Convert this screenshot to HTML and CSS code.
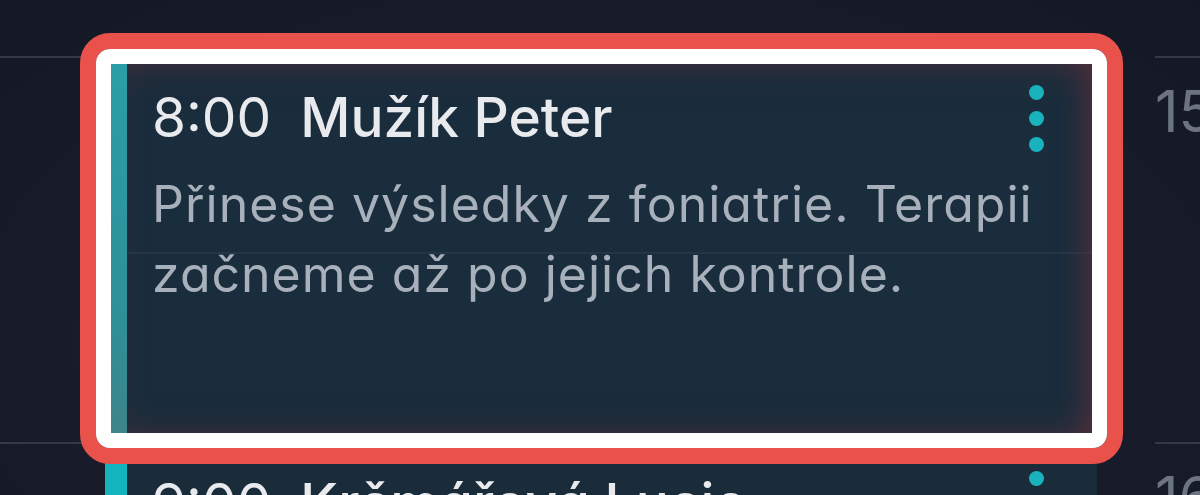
FILE: index.html
```html
<!DOCTYPE html>
<html lang="cs">
<head>
<meta charset="utf-8">
<title>Kalendář</title>
<link rel="stylesheet" href="styles.css">
</head>
<body>
<div class="page">
  <div class="gutter">
    <div class="slot"></div>
    <div class="slot"></div>
  </div>

  <div class="day">
    <article class="event event--selected">
      <div class="event-bar"></div>
      <div class="event-body">
        <h3 class="event-title"><span class="event-time">8:00</span><span class="event-name">Mužík Peter</span></h3>
        <p class="event-note">Přinese výsledky z foniatrie. Terapii začneme až po jejich kontrole.</p>
      </div>
      <button class="event-menu" aria-label="Možnosti"><span></span><span></span><span></span></button>
    </article>

    <article class="event">
      <div class="event-bar event-bar--bright"></div>
      <div class="event-body">
        <h3 class="event-title"><span class="event-time">9:00</span><span class="event-name">Krčmářová Lucie</span></h3>
        <p class="event-note">Kontrola po terapii.</p>
      </div>
      <button class="event-menu" aria-label="Možnosti"><span></span><span></span><span></span></button>
    </article>

    <div class="highlight"><div class="highlight-inner"></div></div>
  </div>

  <div class="hours">
    <div class="hour"><span class="hour-label">15</span></div>
    <div class="hour"><span class="hour-label">16</span></div>
  </div>
</div>
</body>
</html>
```

FILE: styles.css
```css
* { box-sizing: border-box; }

html, body {
  margin: 0;
  padding: 0;
}

body {
  width: 1200px;
  height: 495px;
  overflow: hidden;
  background: radial-gradient(ellipse at 50% 70%, #1b2030 0%, #191d2b 55%, #141724 100%);
  font-family: "Inter", "Noto Sans", "Liberation Sans", sans-serif;
  font-feature-settings: "cv11" 1;
}

.page {
  display: grid;
  grid-template-columns: 82px 1073px 45px;
  height: 495px;
}

/* left gutter with hour lines */
.gutter {
  padding-top: 56px;
}
.slot {
  height: 386px;
  border-top: 2px solid #343947;
}

/* day column */
.day {
  position: relative;
  padding: 59px 0 0 23px;
  display: flex;
  flex-direction: column;
  gap: 4px;
}

.event {
  position: relative;
  width: 992px;
  height: 382px;
  flex: none;
  display: flex;
  background: #1a2c3a;
  border-radius: 4px;
  overflow: hidden;
}

.event--selected {
  background:
    linear-gradient(to bottom, transparent 193px, rgba(255,255,255,0.045) 193px, rgba(255,255,255,0.045) 195px, transparent 195px),
    #1a2d3c;
  box-shadow:
    inset 0 0 40px rgba(120, 50, 60, 0.55),
    inset -20px 0 30px -10px rgba(120, 50, 60, 0.35);
}

.event-bar {
  width: 22px;
  flex: none;
  background: linear-gradient(to bottom, #2a9ea6, #2f8f97 70%, #3f8388);
}
.event-bar--bright {
  background: #14b4bf;
}

.event-body {
  flex: 1;
  padding: 26px 0 0 25px;
}

.event-title {
  margin: 0;
  font-size: 55px;
  line-height: 64px;
  color: #e8eaee;
  font-weight: 400;
  white-space: nowrap;
}
.event-time {
  margin-right: 29px;
}
.event-name {
  font-weight: 500;
}

.event-note {
  margin: 20px 0 0;
  width: 910px;
  font-size: 50px;
  line-height: 70px;
  letter-spacing: 1px;
  color: #a7b0bb;
}

.event-menu {
  position: absolute;
  top: 26px;
  right: 53px;
  display: flex;
  flex-direction: column;
  gap: 11px;
  padding: 0;
  border: 0;
  background: none;
}
.event-menu span {
  width: 15px;
  height: 15px;
  border-radius: 50%;
  background: #19b3bd;
}

/* red selection outline overlaid on the selected card */
.highlight {
  position: absolute;
  left: -2px;
  top: 33px;
  width: 1043px;
  height: 431px;
  border: 16px solid #e8524a;
  border-radius: 30px;
  pointer-events: none;
}
.highlight-inner {
  width: 100%;
  height: 100%;
  border: 15px solid #ffffff;
  border-radius: 14px;
}

/* right hour labels */
.hours {
  padding-top: 56px;
}
.hour {
  height: 386px;
  border-top: 2px solid #343947;
  padding-top: 18px;
}
.hour-label {
  display: block;
  font-size: 58px;
  line-height: 70px;
  color: #6c7482;
  font-weight: 400;
  white-space: nowrap;
}
```
